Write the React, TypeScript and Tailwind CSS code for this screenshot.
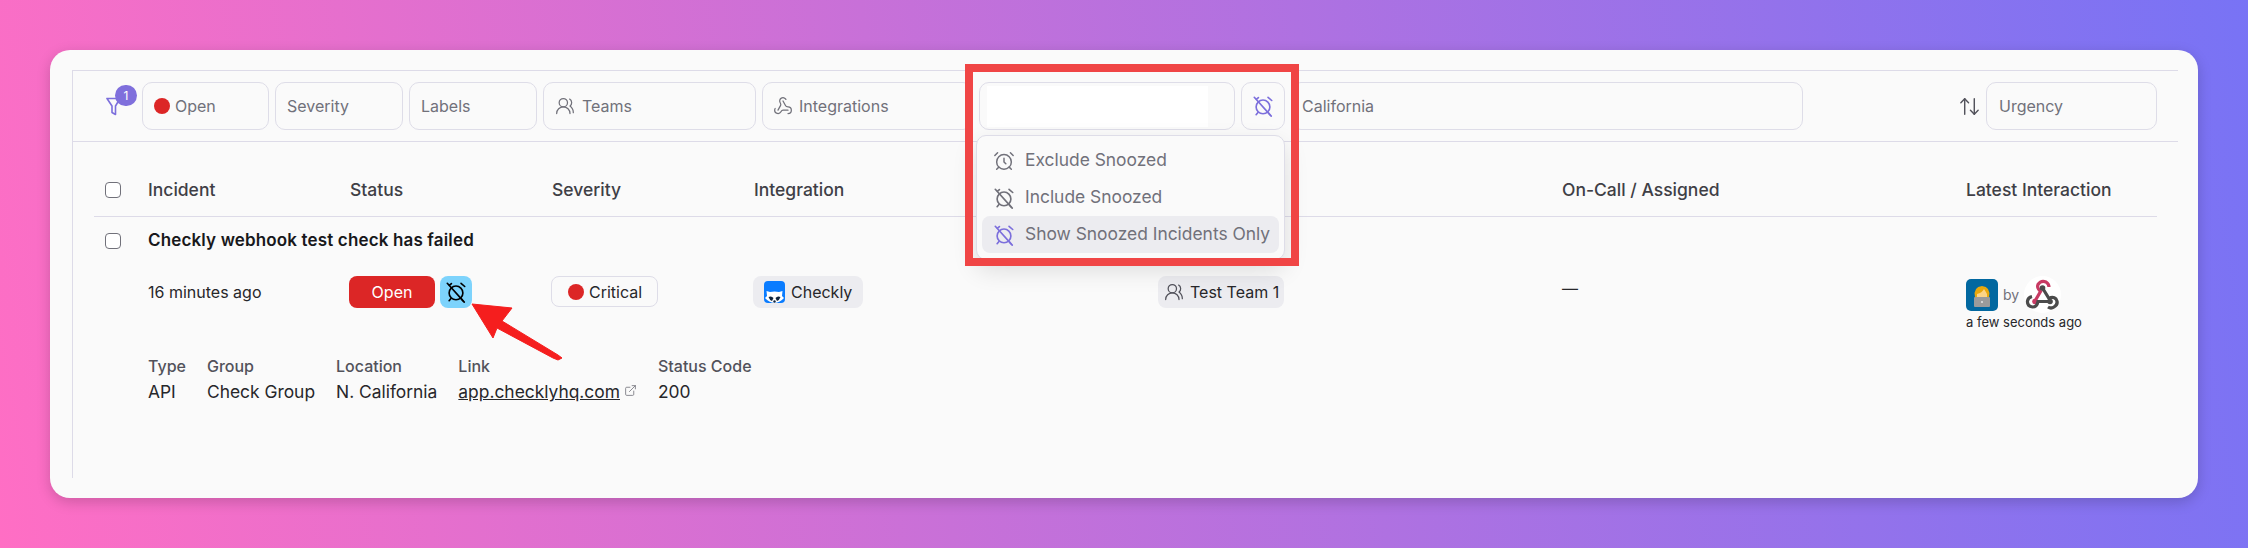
import { AlarmClock, ArrowUpDown, ExternalLink, UsersRound, Webhook } from 'lucide-react';
import type { ReactNode } from 'react';

function Chip({ width, children, className = '' }: { width: string; children?: ReactNode; className?: string }) {
  return (
    <div className={`flex h-[48px] shrink-0 items-center rounded-[10px] border border-[#dedde8] px-[12px] text-[16px] text-[#71717a] ${width} ${className}`}>
      {children}
    </div>
  );
}

function Checkbox() {
  return <div className="h-[16px] w-[16px] rounded-[4px] border border-[#71717a] bg-white" />;
}

function SnoozeIcon({ className = '' }: { className?: string }) {
  return (
    <svg width="22" height="22" viewBox="0 0 24 24" fill="none" stroke="currentColor" strokeWidth="1.8" strokeLinecap="round" className={`shrink-0 ${className}`}>
      <circle cx="12" cy="13" r="7.500" />
      <path d="M2.500 2.500 L21 23" />
      <path d="M17.500 2.500 L21.500 6" />
      <path d="M7 2.800 L5 4.500" />
      <path d="M6.500 19 L4.500 21.500" />
      <path d="M17.500 19 L19.500 21.500" />
    </svg>
  );
}

function CheckyLogo() {
  return (
    <svg width="21" height="22" viewBox="0 0 21 22" className="shrink-0">
      <rect width="21" height="22" rx="4" fill="#0a7cff" />
      <path d="M2.500 10 L6 11 Q10.500 10 15 11 L18.500 10 L18 15 L20 17 Q16 21.500 10.500 22 Q5 21.500 1 17 L3 15 Z" fill="#ffffff" />
      <path d="M4.500 16 Q7.500 14.500 9.500 17 L8 20 Q5.500 19 4.500 16 Z M16.500 16 Q13.500 14.500 11.500 17 L13 20 Q15.500 19 16.500 16 Z" fill="#10243e" />
      <circle cx="10.500" cy="20.500" r="1.200" fill="#10243e" />
    </svg>
  );
}

function AvatarLogo() {
  return (
    <svg width="32" height="32" viewBox="0 0 32 32" className="shrink-0">
      <rect width="32" height="32" rx="5" fill="#0268a0" />
      <path d="M9 18 Q7 8 16 7 Q25 8 23 18 L23 20 L9 20 Z" fill="#e9a80c" />
      <path d="M11 15 Q16 14 18 10 Q20 13 21 15 L21 20 L11 20 Z" fill="#fcd486" />
      <rect x="8" y="18" width="16" height="10" rx="1" fill="#9b9b9b" />
      <circle cx="16" cy="23" r="1" fill="#e5e5e5" />
    </svg>
  );
}

function WebhookLogo() {
  return (
    <svg width="37" height="37" viewBox="0 0 37 37" className="shrink-0">
      <circle cx="18.500" cy="18.500" r="18.500" fill="#ffffff" />
      <path d="M11 25 L16.500 15.500 Q12.500 12 14 8.500 Q17 4 22 6 Q25 8 25 11" fill="none" stroke="#c73a63" strokeWidth="3.200" />
      <circle cx="11" cy="25.500" r="2.800" fill="#c73a63" />
      <path d="M18.500 12 L25 22.500 Q29 20 32 23 Q35 28 30 31 Q27 33 24 31" fill="none" stroke="#4b4b4b" strokeWidth="3.200" />
      <circle cx="18.500" cy="12" r="2.800" fill="#4b4b4b" />
      <path d="M26 25.500 L14 25.500 Q13 31 8.500 31 Q3 30 3.500 25 Q4 21.500 8 20.500" fill="none" stroke="#4b4b4b" strokeWidth="3.200" />
      <circle cx="26" cy="25.500" r="2.800" fill="#4b4b4b" />
    </svg>
  );
}

function Detail({ label, children }: { label: string; children: ReactNode }) {
  return (
    <div className="flex flex-col">
      <div className="h-[26px] text-[16px] font-medium leading-[24px] text-[#52525b]">{label}</div>
      <div className="leading-[24px] text-[#27272a]">{children}</div>
    </div>
  );
}

export default function App() {
  return (
    <div className="h-[548px] w-[2248px] overflow-hidden bg-[linear-gradient(80deg,#ff6ec4,#7873f5)] p-[50px] font-['Inter',sans-serif]">
      <div className="relative h-[448px] rounded-[20px] bg-[#fafafa] pl-[22px] pr-[20px] pt-[20px] shadow-[0_4px_14px_rgba(0,0,0,0.18)]">
        <div className="h-[408px] border-l border-t border-[#dddbe8]">
          {/* filters */}
          <div className="flex h-[71px] items-center justify-between border-b border-[#dddbe8] pl-[33px] pr-[21px]">
            <div className="flex items-center gap-[6px]">
              <div className="relative h-[48px] w-[30px]">
                <svg width="15" height="19" viewBox="0 0 15 19" fill="none" stroke="#7c6fdc" strokeWidth="1.600" strokeLinejoin="round" className="absolute left-0 top-[15px]">
                  <path d="M1 1.500 H14 L9.500 9 V17.500 L6 15.500 V9 Z" />
                </svg>
                <div className="absolute left-[9px] top-[3px] flex h-[21px] w-[22px] items-center justify-center rounded-full bg-[#7f6fdc] text-[12px] text-white">1</div>
              </div>
              <Chip width="w-[127px]" className="pl-[11px] text-[#27272a]">
                <span className="mr-[5px] h-[16px] w-[16px] rounded-full bg-[#dc2626]" />
                Open
              </Chip>
              <Chip width="w-[128px]" className="pl-[11px]">Severity</Chip>
              <Chip width="w-[128px]" className="pl-[11px]">Labels</Chip>
              <Chip width="w-[213px]" className="pl-[11px]">
                <UsersRound size={20} strokeWidth={1.5} className="mr-[7px]" />
                Teams
              </Chip>
              <Chip width="w-[211px]" className="pl-[10px]">
                <Webhook size={20} strokeWidth={1.5} className="mr-[6px]" />
                Integrations
              </Chip>
              <Chip width="w-[256px]" className="pl-[7px]">
                <div className="h-[41px] w-[221px] bg-white" />
              </Chip>
              <Chip width="w-[44px]" className="justify-center border-[#c9c3f5] px-0">
                <SnoozeIcon className="text-[#7c6fdc]" />
              </Chip>
              <Chip width="w-[512px]" className="pl-[10px] text-[#27272a]">California</Chip>
            </div>
            <div className="flex items-center gap-[5px]">
              <ArrowUpDown size={23} strokeWidth={1.5} className="text-[#52525b]" />
              <Chip width="w-[171px]" className="px-[10px]">Urgency</Chip>
            </div>
          </div>

          {/* table */}
          <div className="ml-[21px] mr-[21px] text-[16px] text-[#27272a]">
            <div className="grid h-[75px] grid-cols-[42px_203px_202px_202px_404px_404px_404px_1fr] items-end border-b border-[#dddbe8] pb-[14px] pl-[11px] text-[17.500px] font-medium leading-[24px] text-[#3f3f46]">
              <div className="pb-[4px]"><Checkbox /></div>
              <div className="pl-[1px]">Incident</div>
              <div>Status</div>
              <div>Severity</div>
              <div>Integration</div>
              <div>Teams</div>
              <div>On-Call / Assigned</div>
              <div>Latest Interaction</div>
            </div>
            <div className="flex h-[48px] items-center pl-[11px]">
              <div className="w-[43px]"><Checkbox /></div>
              <div className="text-[17px] font-semibold tracking-[0.15px] text-[#18181b]">Checkly webhook test check has failed</div>
            </div>
            <div className="mt-[11px] grid grid-cols-[203px_202px_202px_405px_404px_404px_1fr] items-start pl-[52px]">
              <div className="pl-[2px] leading-[32px]">16 minutes ago</div>
              <div className="flex gap-[5px]">
                <div className="flex h-[32px] w-[86px] items-center justify-center rounded-[8px] bg-[#dc2626] text-white">Open</div>
                <div className="flex h-[32px] w-[32px] items-center justify-center rounded-[8px] bg-[#7dd3fc]">
                  <SnoozeIcon className="text-black" />
                </div>
              </div>
              <div className="flex h-[31px] w-[107px] items-center rounded-[8px] border border-[#dedde8] pl-[16px]">
                <span className="mr-[5px] h-[16px] w-[16px] rounded-full bg-[#dc2626]" />
                Critical
              </div>
              <div>
                <div className="inline-flex h-[32px] items-center gap-[6px] rounded-[8px] bg-[#ececf0] pl-[11px] pr-[11px]">
                  <CheckyLogo />
                  Checkly
                </div>
              </div>
              <div>
                <div className="inline-flex h-[32px] items-center gap-[6px] rounded-[8px] bg-[#ececf0] pl-[6px] pr-[5px]">
                  <UsersRound size={20} strokeWidth={1.5} className="text-[#52525b]" />
                  Test Team 1
                </div>
              </div>
              <div className="leading-[24px]">—</div>
              <div>
                <div className="flex h-[37px] items-center">
                  <AvatarLogo />
                  <span className="ml-[5px] mr-[5px] text-[14px] text-[#71717a]">by</span>
                  <WebhookLogo />
                </div>
                <div className="whitespace-nowrap text-[13px] leading-[18px]">a few seconds ago</div>
              </div>
            </div>
            <div className="mt-[23px] flex gap-[21px] pl-[54px] text-[17.400px]">
              <Detail label="Type">API</Detail>
              <Detail label="Group">Check Group</Detail>
              <Detail label="Location">N. California</Detail>
              <Detail label="Link">
                <span className="underline">app.checklyhq.com</span>
                <ExternalLink size={13} strokeWidth={1.5} className="ml-[4px] mb-[6px] inline text-[#71717a]" />
              </Detail>
              <Detail label="Status Code">200</Detail>
            </div>
          </div>
        </div>

        {/* snooze dropdown, opened over the table */}
        <div className="absolute left-[926px] top-[85px] flex w-[309px] flex-col rounded-[10px] border border-[#dedde8] bg-[#fafafa] px-[5px] py-[6px] text-[17.400px] text-[#71717a] shadow-[0_10px_25px_rgba(0,0,0,0.12)]">
          <div className="flex h-[37px] items-center gap-[10px] pl-[11px]">
            <AlarmClock size={22} strokeWidth={1.6} />
            Exclude Snoozed
          </div>
          <div className="flex h-[37px] items-center gap-[10px] pl-[11px]">
            <SnoozeIcon />
            Include Snoozed
          </div>
          <div className="flex h-[37px] items-center gap-[10px] rounded-[8px] bg-[#ececf0] pl-[11px]">
            <SnoozeIcon className="text-[#7c6fdc]" />
            Show Snoozed Incidents Only
          </div>
        </div>

        {/* annotations */}
        <div className="pointer-events-none absolute left-[915px] top-[14px] h-[202px] w-[334px] border-[8px] border-[#f04545]" />
        <svg className="pointer-events-none absolute left-[400px] top-[240px]" width="130" height="80" viewBox="0 0 130 80">
          <path d="M22 14 L62 18 L52 31 L108 65 L112 68 L108 70 L103 68 L47 38 L43 48 Z" fill="#f51e1e" stroke="#f51e1e" strokeWidth="1" strokeLinejoin="round" />
        </svg>
      </div>
    </div>
  );
}
